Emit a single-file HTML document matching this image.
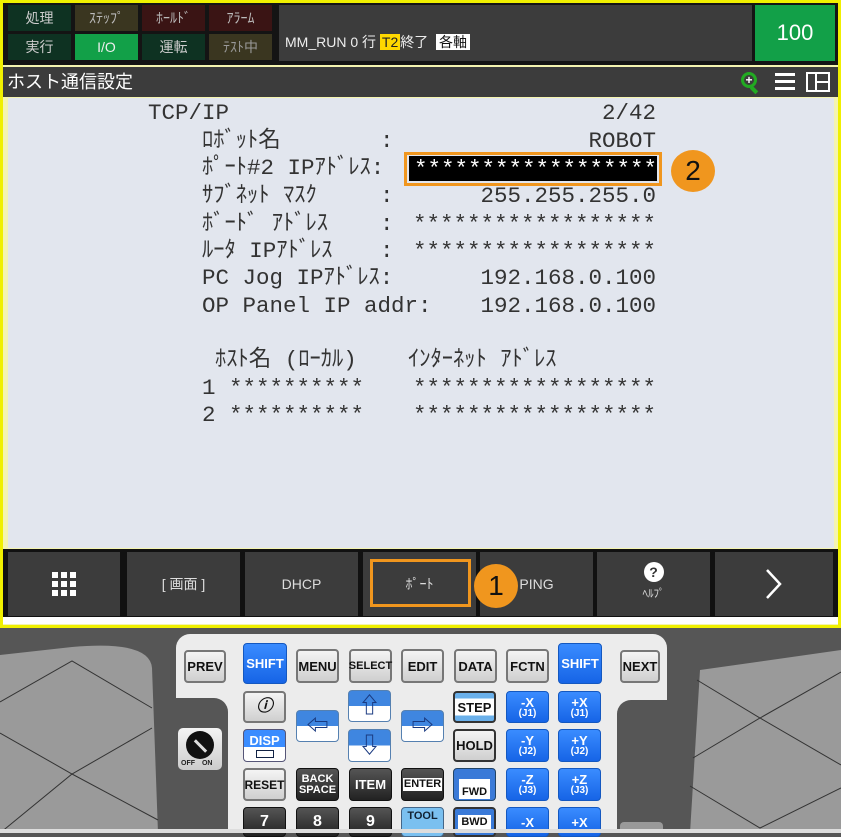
<!DOCTYPE html>
<html><head><meta charset="utf-8"><style>
*{margin:0;padding:0;box-sizing:border-box}
body{width:841px;height:833px;overflow:hidden;background:#565656;position:relative;font-family:"Liberation Sans","Noto Sans CJK JP",sans-serif}
.a{position:absolute}
.scr{left:0;top:0;width:841px;height:628px;background:#f4f4b0;border:3px solid #f0f000}
.st{color:#ccc;font-size:14px;text-align:center;line-height:26px}
.m{font-family:"Liberation Mono","Noto Sans CJK JP",monospace;font-size:22.5px;color:#333;white-space:pre;line-height:26px}
.r{text-align:right;width:300px}
.fk{background:#3c3c3c;color:#ddd;font-size:14px;text-align:center;top:552px;height:64px;line-height:64px}
.k{position:absolute;border-radius:4px;font-weight:bold;font-size:13px;text-align:center;display:flex;align-items:center;justify-content:center;line-height:1}
.g{background:linear-gradient(#f4f4f4,#cfcfcf);border:2px solid #777;color:#111}
.b{background:linear-gradient(#3a8cff,#1664e6);border:1px solid #1458c0;color:#fff}
.d{background:linear-gradient(#555,#222);color:#fff;border:1px solid #111}
.ar{background:linear-gradient(#3f86e0 50%,#fff 50%);border:1px solid #5580b0;color:#1a3a80;font-size:22px}
</style></head><body>
<div class="a scr"></div>
<div class="a" style="left:3px;top:3px;width:835px;height:62px;background:#141414"></div>
<div class="a st" style="left:8px;top:5px;width:63px;background:#0e3222">処理</div>
<div class="a st" style="left:75px;top:5px;width:63px;background:#3a3620;color:#bbb">ｽﾃｯﾌﾟ</div>
<div class="a st" style="left:142px;top:5px;width:63px;background:#3a1414;color:#bbb">ﾎｰﾙﾄﾞ</div>
<div class="a st" style="left:209px;top:5px;width:63px;background:#3a1414;color:#bbb">ｱﾗｰﾑ</div>
<div class="a st" style="left:8px;top:34px;width:63px;background:#0e3222">実行</div>
<div class="a st" style="left:75px;top:34px;width:63px;background:#12a048;color:#eee">I/O</div>
<div class="a st" style="left:142px;top:34px;width:63px;background:#0e3222">運転</div>
<div class="a st" style="left:209px;top:34px;width:63px;background:#3a3620;color:#999">ﾃｽﾄ中</div>
<div class="a" style="left:279px;top:5px;width:473px;height:56px;background:#3c3c3c;color:#eee;font-size:14px;padding:27px 0 0 6px;white-space:pre">MM_RUN 0 行 <span style="background:#ffd800;color:#222;padding:0 2px">T2</span>終了  <span style="background:#fff;color:#111;padding:0 3px">各軸</span></div>
<div class="a" style="left:755px;top:5px;width:80px;height:56px;background:#12a048;color:#fff;font-size:22px;text-align:center;line-height:56px">100</div>
<div class="a" style="left:3px;top:67px;width:835px;height:30px;background:#3c3c3c;color:#fff;font-size:18px;line-height:30px;padding-left:4px">ホスト通信設定</div>
<div class="a" style="left:741px;top:72px;width:16px;height:16px;border:3px solid #2a2;border-radius:50%;color:#fff;font-size:12px;font-weight:bold;text-align:center;line-height:10px">+</div>
<div class="a" style="left:752px;top:86px;width:4px;height:8px;background:#2a2;transform:rotate(-45deg)"></div>
<div class="a" style="left:775px;top:73px;width:20px;height:17px;border-top:3px solid #fff;border-bottom:3px solid #fff"></div>
<div class="a" style="left:775px;top:80px;width:20px;height:3px;background:#fff"></div>
<div class="a" style="left:806px;top:72px;width:24px;height:20px;border:2px solid #fff"></div>
<div class="a" style="left:815px;top:72px;width:2px;height:20px;background:#fff"></div>
<div class="a" style="left:815px;top:81px;width:14px;height:2px;background:#fff"></div>
<div class="a" style="left:8px;top:98px;width:826px;height:450px;background:#e2e6ee"></div>

<div class="a m" style="left:148px;top:100px">TCP/IP</div><div class="a m r" style="left:356px;top:100px">2/42</div>
<div class="a m" style="left:202px;top:128px">ﾛﾎﾞｯﾄ名</div><div class="a m" style="left:380px;top:128px">:</div><div class="a m r" style="left:356px;top:128px">ROBOT</div>
<div class="a m" style="left:202px;top:155px">ﾎﾟｰﾄ#2 IPｱﾄﾞﾚｽ:</div>
<div class="a" style="left:404px;top:152px;width:258px;height:34px;border:3px solid #f0961e"></div>
<div class="a m" style="left:409px;top:156px;width:248px;height:25px;background:#000;color:#fff;text-align:right">******************</div>
<div class="a" style="left:671px;top:150px;width:44px;height:42px;border-radius:50%;background:#f0961e;color:#111;font-size:28px;text-align:center;line-height:42px">2</div>
<div class="a m" style="left:202px;top:183px">ｻﾌﾞﾈｯﾄ ﾏｽｸ</div><div class="a m" style="left:380px;top:183px">:</div><div class="a m r" style="left:356px;top:183px">255.255.255.0</div>
<div class="a m" style="left:202px;top:211px">ﾎﾞｰﾄﾞ ｱﾄﾞﾚｽ</div><div class="a m" style="left:380px;top:211px">:</div><div class="a m r" style="left:356px;top:211px">******************</div>
<div class="a m" style="left:202px;top:238px">ﾙｰﾀ IPｱﾄﾞﾚｽ</div><div class="a m" style="left:380px;top:238px">:</div><div class="a m r" style="left:356px;top:238px">******************</div>
<div class="a m" style="left:202px;top:265px">PC Jog IPｱﾄﾞﾚｽ:</div><div class="a m r" style="left:356px;top:265px">192.168.0.100</div>
<div class="a m" style="left:202px;top:293px">OP Panel IP addr:</div><div class="a m r" style="left:356px;top:293px">192.168.0.100</div>
<div class="a m" style="left:215px;top:347px">ﾎｽﾄ名 (ﾛｰｶﾙ)</div><div class="a m" style="left:408px;top:347px">ｲﾝﾀｰﾈｯﾄ ｱﾄﾞﾚｽ</div>
<div class="a m" style="left:202px;top:375px">1 **********</div><div class="a m r" style="left:356px;top:375px">******************</div>
<div class="a m" style="left:202px;top:402px">2 **********</div><div class="a m r" style="left:356px;top:402px">******************</div>

<div class="a" style="left:3px;top:549px;width:835px;height:71px;background:#111"></div>
<div class="a fk" style="left:8px;width:112px"></div>
<svg class="a" style="left:52px;top:572px" width="24" height="24"><g fill="#fff"><rect x="0" y="0" width="6" height="6"/><rect x="9" y="0" width="6" height="6"/><rect x="18" y="0" width="6" height="6"/><rect x="0" y="9" width="6" height="6"/><rect x="9" y="9" width="6" height="6"/><rect x="18" y="9" width="6" height="6"/><rect x="0" y="18" width="6" height="6"/><rect x="9" y="18" width="6" height="6"/><rect x="18" y="18" width="6" height="6"/></g></svg>
<div class="a fk" style="left:127px;width:113px">[ 画面 ]</div>
<div class="a fk" style="left:245px;width:113px">DHCP</div>
<div class="a fk" style="left:363px;width:113px">ﾎﾟｰﾄ</div>
<div class="a" style="left:370px;top:559px;width:101px;height:48px;border:3px solid #f0961e"></div>
<div class="a fk" style="left:480px;width:113px">PING</div>
<div class="a" style="left:474px;top:564px;width:44px;height:44px;border-radius:50%;background:#f0961e;color:#111;font-size:28px;text-align:center;line-height:44px">1</div>
<div class="a fk" style="left:597px;width:113px;line-height:20px;padding-top:10px"><span style="display:inline-block;width:20px;height:20px;border-radius:50%;background:#fff;color:#333;font-weight:bold">?</span><br><span style="font-size:11px">ﾍﾙﾌﾟ</span></div>
<div class="a fk" style="left:715px;width:118px"></div>
<svg class="a" style="left:764px;top:568px" width="20" height="32"><path d="M3 2 L16 16 L3 30" stroke="#fff" stroke-width="2.5" fill="none"/></svg>
<div class="a" style="left:3px;top:617px;width:835px;height:7px;background:#fff"></div>

<svg class="a" style="left:0;top:628px" width="841" height="205">
<path d="M0 27 L72 19 Q150 12 152 40 L158 205 L0 205Z" fill="#9a9a9a"/>
<path d="M0 74 L72 33 L152 80 M0 105 L72 146 L152 100 M0 205 L72 146 L158 192" stroke="#333" stroke-width="1" fill="none"/>
<path d="M700 42 L841 22 L841 205 L690 205Z" fill="#9a9a9a"/>
<path d="M697 52 L760 90 L841 44 M693 130 L760 90 L841 137 M690 158 L760 200 L841 160" stroke="#333" stroke-width="1" fill="none"/>
</svg>
<div class="a" style="left:176px;top:634px;width:491px;height:199px;background:#ececec;border-radius:14px 14px 0 0"></div>
<div class="a" style="left:176px;top:698px;width:52px;height:135px;background:#565656;border-radius:0 14px 0 0"></div>
<div class="a" style="left:617px;top:700px;width:50px;height:133px;background:#565656;border-radius:14px 0 0 0"></div>
<div class="a" style="left:178px;top:728px;width:44px;height:42px;background:linear-gradient(#f4f4f4,#ccc);border-radius:5px"></div>
<div class="a" style="left:186px;top:731px;width:28px;height:28px;border-radius:50%;background:#111"></div>
<div class="a" style="left:199px;top:738px;width:3px;height:16px;background:#ddd;transform:rotate(-45deg)"></div>
<div class="a" style="left:181px;top:760px;font-size:7px;font-weight:bold;color:#222;word-spacing:5px">OFF ON</div>

<div class="k g" style="left:184px;top:650px;width:42px;height:33px">PREV</div>
<div class="k b" style="left:243px;top:643px;width:44px;height:41px">SHIFT</div>
<div class="k g" style="left:296px;top:649px;width:43px;height:34px">MENU</div>
<div class="k g" style="left:349px;top:649px;width:43px;height:34px;font-size:11px">SELECT</div>
<div class="k g" style="left:401px;top:649px;width:43px;height:34px">EDIT</div>
<div class="k g" style="left:454px;top:649px;width:43px;height:34px">DATA</div>
<div class="k g" style="left:506px;top:649px;width:43px;height:34px">FCTN</div>
<div class="k b" style="left:558px;top:643px;width:44px;height:41px">SHIFT</div>
<div class="k g" style="left:620px;top:650px;width:40px;height:33px">NEXT</div>

<div class="k g" style="left:243px;top:691px;width:43px;height:32px;font-style:italic;font-family:'Liberation Serif',serif;font-size:16px">ⓘ</div>
<div class="k ar" style="left:296px;top:710px;width:43px;height:32px">⇦</div>
<div class="k ar" style="left:348px;top:690px;width:43px;height:32px">⇧</div>
<div class="k ar" style="left:348px;top:729px;width:43px;height:33px">⇩</div>
<div class="k ar" style="left:401px;top:710px;width:43px;height:32px">⇨</div>
<div class="k g" style="left:453px;top:691px;width:43px;height:32px;border-color:#333;background:linear-gradient(#6ab0ea 20%,#fff 20%,#fff 80%,#6ab0ea 80%)">STEP</div>
<div class="k b" style="left:506px;top:691px;width:43px;height:32px;flex-direction:column">-X<br><span style="font-size:10px">(J1)</span></div>
<div class="k b" style="left:558px;top:691px;width:43px;height:32px;flex-direction:column">+X<br><span style="font-size:10px">(J1)</span></div>

<div class="k" style="left:243px;top:729px;width:43px;height:33px;background:linear-gradient(#3a8cff 55%,#fff 55%);border:1px solid #557;color:#fff;flex-direction:column">DISP<span style="display:block;width:18px;height:8px;border:1px solid #124;margin-top:3px"></span></div>
<div class="k g" style="left:453px;top:729px;width:43px;height:33px;border-color:#333">HOLD</div>
<div class="k b" style="left:506px;top:729px;width:43px;height:33px;flex-direction:column">-Y<br><span style="font-size:10px">(J2)</span></div>
<div class="k b" style="left:558px;top:729px;width:43px;height:33px;flex-direction:column">+Y<br><span style="font-size:10px">(J2)</span></div>

<div class="k g" style="left:243px;top:768px;width:43px;height:33px;font-size:12px">RESET</div>
<div class="k d" style="left:296px;top:768px;width:43px;height:33px;font-size:11px;flex-direction:column">BACK<br>SPACE</div>
<div class="k d" style="left:349px;top:768px;width:43px;height:33px">ITEM</div>
<div class="k d" style="left:401px;top:768px;width:43px;height:33px;font-size:11px"><span style="background:#fff;color:#111;padding:1px">ENTER</span></div>
<div class="k" style="left:453px;top:768px;width:43px;height:33px;background:#3a7ad8;color:#111;border:1px solid #246"><span style="background:#fff;padding:8px 3px 1px;font-size:11px;margin-top:8px">FWD</span></div>
<div class="k b" style="left:506px;top:768px;width:43px;height:33px;flex-direction:column">-Z<br><span style="font-size:10px">(J3)</span></div>
<div class="k b" style="left:558px;top:768px;width:43px;height:33px;flex-direction:column">+Z<br><span style="font-size:10px">(J3)</span></div>

<div class="k d" style="left:243px;top:807px;width:43px;height:30px;font-size:16px">7</div>
<div class="k d" style="left:296px;top:807px;width:43px;height:30px;font-size:16px">8</div>
<div class="k d" style="left:349px;top:807px;width:43px;height:30px;font-size:16px">9</div>
<div class="k" style="left:401px;top:807px;width:43px;height:30px;background:#7ac0f0;color:#123;border:1px solid #468;font-size:11px;align-items:flex-start;padding-top:3px">TOOL</div>
<div class="k g" style="left:453px;top:807px;width:43px;height:30px;border-color:#333;background:#3a7ad8;font-size:11px"><span style="background:#fff;padding:2px 3px">BWD</span></div>
<div class="k b" style="left:506px;top:807px;width:43px;height:30px">-X</div>
<div class="k b" style="left:558px;top:807px;width:43px;height:30px">+X</div>
<div class="a" style="left:620px;top:822px;width:43px;height:11px;background:#999;border-radius:4px 4px 0 0"></div>
<div class="a" style="left:0;top:829px;width:841px;height:4px;background:#ddd"></div>
</body></html>
